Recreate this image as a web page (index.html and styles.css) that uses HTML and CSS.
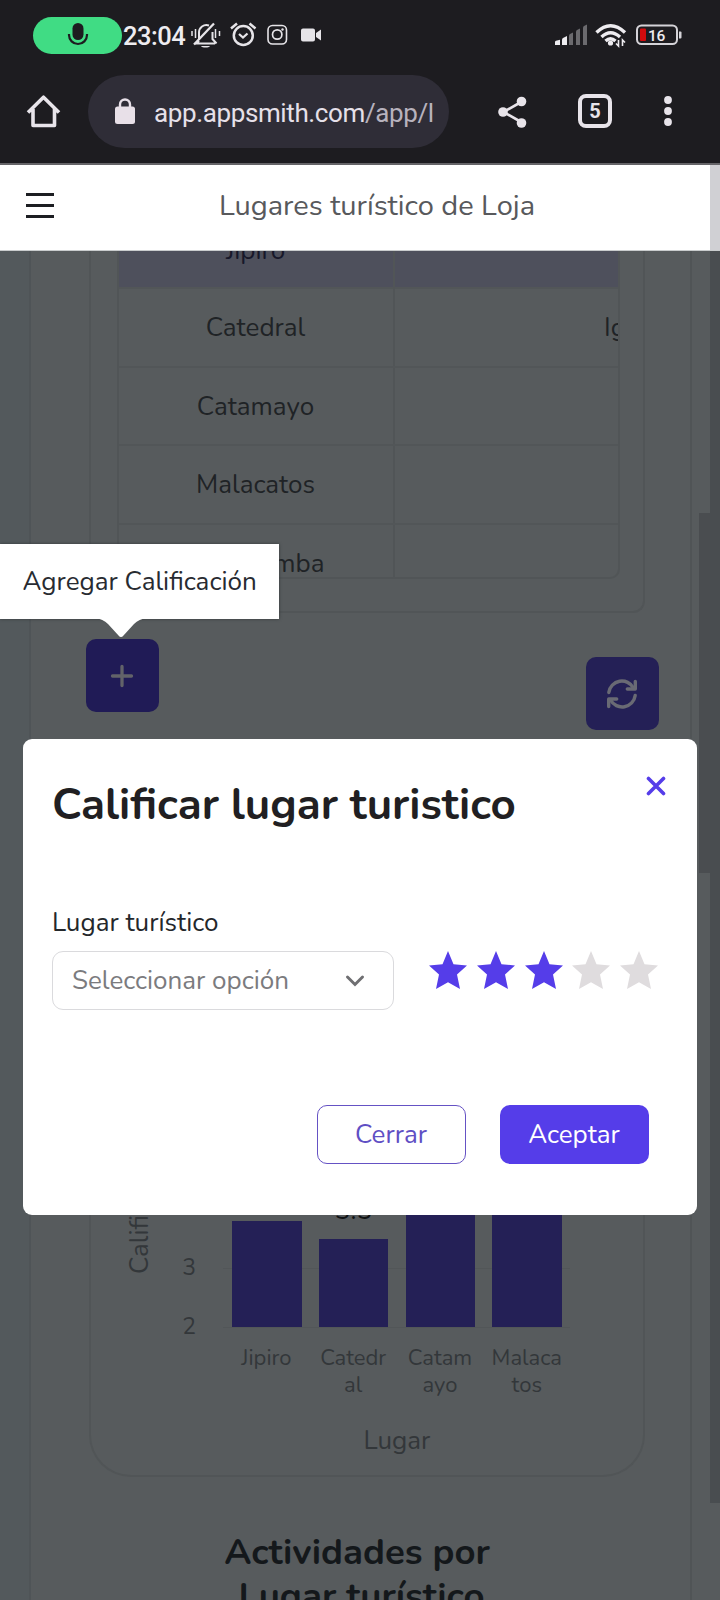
FILE: index.html
```html
<!DOCTYPE html>
<html lang="es">
<head>
<meta charset="utf-8">
<title>Lugares turístico de Loja</title>
<link rel="stylesheet" href="styles.css">
</head>
<body>
<div class="phone">
  <div class="status">
    <div class="mic-pill">
      <svg width="22" height="26" viewBox="0 0 22 26"><rect x="5.5" y="1" width="11" height="17" rx="5.5" fill="#1d1c20"/><path d="M2 12v1a9 9 0 0 0 18 0v-1" fill="none" stroke="#1d1c20" stroke-width="2.2"/></svg>
    </div>
    <span class="clock">23:04</span>
    <svg class="status-left" width="136" height="30" viewBox="188 20 136 30" fill="none" stroke="#e6e4e8" stroke-width="2">
      <path d="M199 41l-2 2.500h18M199 40V33a7.500 7.500 0 0 1 10-7.500M212.500 32v7l4 4.500" />
      <path d="M194 44.500L214 23.500" stroke-width="2.300"/>
      <path d="M201 46h9c-1 2-8 2-9 0z" fill="#e6e4e8" stroke="none"/>
      <path d="M192 31v5M195.500 29v9M215.500 29v9M219.500 31v5" stroke-width="1.500"/>
      <circle cx="243.300" cy="35.500" r="9.500" stroke-width="2.500"/>
      <path d="M231 28.500l6-5M255.500 28.500l-6-5" stroke-width="2.500"/>
      <path d="M239 34l4 3.500 4.500-4" stroke-width="2.300"/>
      <rect x="268" y="25.500" width="18.500" height="18.500" rx="4.500" stroke-width="1.600"/>
      <circle cx="277.200" cy="34.500" r="4.700" stroke-width="1.700"/>
      <circle cx="282.500" cy="29.500" r="1.200" fill="#e6e4e8" stroke="none"/>
      <path d="M303 28.500h10a2 2 0 0 1 2 2v9a2 2 0 0 1-2 2h-10a2 2 0 0 1-2-2v-9a2 2 0 0 1 2-2zM321 29.500v11l-5-3.500v-4z" fill="#e6e4e8" stroke="none"/>
    </svg>
    <svg class="status-right" width="130" height="30" viewBox="553 20 130 30" fill="none">
      <path d="M555 42q0-1 1-1.300l4-1V45h-5zM562 40q0-1.500 1-2l4-2v9h-5z" fill="#eeecf0"/>
      <path d="M569 36q0-1.500 1-2l3-1.500V45h-4zM576 32q0-1.500 1-2l3-1.500V45h-4zM583 28q0-1.500 1-2l3-1.500V45h-4z" fill="#6b6a6e"/>
      <g stroke="#eeecf0" stroke-width="3.400"><path d="M596.500 32.500q14-13.500 28.500 0M601.500 37q9-8.500 18.500 0M605.500 41q5-4.500 10 0"/></g>
      <circle cx="610.500" cy="43" r="2.600" fill="#eeecf0"/>
      <path d="M618.500 40v6l-2.500-2.500M622.500 46v-6l2.500 2.500" stroke="#eeecf0" stroke-width="1.600"/>
      <rect x="637" y="25.500" width="40" height="18.500" rx="4.500" stroke="#d5d3d8" stroke-width="2"/>
      <rect x="640" y="28.500" width="6" height="12.500" rx="1" fill="#d20b0d"/>
      <path d="M679 31.500h1.500q1 0 1 1v5q0 1-1 1H679z" fill="#d5d3d8"/>
      <text x="648" y="40.500" class="battery-text">16</text>
    </svg>
  </div>
  <div class="browser">
    <svg class="home" width="36" height="36" viewBox="0 0 36 36" fill="none" stroke="#e8e4ea" stroke-width="3.600" stroke-linejoin="round"><path d="M2 18.500L17.500 3.200 33 18.500M7 15v16.500h21.500V15"/></svg>
    <div class="address">
      <svg width="22" height="28" viewBox="0 0 22 28"><rect x="1" y="9.500" width="20" height="17.500" rx="2.500" fill="#e8e0e8"/><path d="M6 10V7.500a5 5 0 0 1 10 0V10" fill="none" stroke="#e8e0e8" stroke-width="2.400"/></svg>
      <span class="url">app.appsmith.com<span class="url-path">/app/l</span></span>
    </div>
    <svg class="share" width="30" height="34" viewBox="0 0 30 34" fill="#e8e4ea"><path d="M25 6.500L6.500 17 25 27.500" fill="none" stroke="#e8e4ea" stroke-width="2.600"/><circle cx="24.500" cy="6.500" r="4.800"/><circle cx="6" cy="17" r="4.800"/><circle cx="24.500" cy="28" r="4.800"/></svg>
    <div class="tabs">5</div>
    <svg class="dots" width="10" height="32" viewBox="0 0 10 32" fill="#e8e4ea"><circle cx="5" cy="5" r="3.900"/><circle cx="5" cy="16" r="3.900"/><circle cx="5" cy="27" r="3.900"/></svg>
  </div>
  <header class="appbar">
    <div class="burger"><i></i><i></i><i></i></div>
    <h1>Lugares turístico de Loja</h1>
    <div class="appbar-scroll"></div>
  </header>
  <main class="page">
    <section class="canvas">
      <div class="panel table-panel">
        <div class="table">
          <div class="row selected"><span>Jipiro</span><span></span></div>
          <div class="row"><span>Catedral</span><span class="clipped">Iglesia</span></div>
          <div class="row"><span>Catamayo</span><span></span></div>
          <div class="row"><span>Malacatos</span><span></span></div>
          <div class="row"><span>Vilcabamba</span><span></span></div>
        </div>
      </div>
      <div class="actions">
        <button class="square add"><svg width="24" height="24" viewBox="0 0 24 24" stroke="#626369" stroke-width="3.300" stroke-linecap="round"><path d="M12 2.500v19M2.500 12h19"/></svg></button>
        <button class="square refresh"><svg width="32" height="32" viewBox="0 0 32 32" fill="none" stroke="#696a74" stroke-width="3.400" stroke-linecap="round" stroke-linejoin="round"><path d="M2.800 14.500A13.200 13.200 0 0 1 27.500 10M29.200 17.500A13.200 13.200 0 0 1 4.500 22"/><path d="M29.300 3.500v7.500h-8M2.700 28.500V21h8"/></svg></button>
      </div>
      <div class="panel chart">
        <div class="y-title"><span>Calificación</span></div>
        <div class="ticks"><span>3</span><span>2</span></div>
        <div class="bars">
          <div class="bar" style="height:106px"></div>
          <div class="bar" style="height:88px"><b>3.5</b></div>
          <div class="bar" style="height:300px"></div>
          <div class="bar" style="height:300px"></div>
        </div>
        <div class="labels"><span>Jipiro</span><span>Catedr<br>al</span><span>Catam<br>ayo</span><span>Malaca<br>tos</span></div>
        <div class="x-title">Lugar</div>
      </div>
      <h2><span>Actividades por</span><span class="second">Lugar turístico</span></h2>
    </section>
    <div class="scroll-inner"></div>
    <div class="scroll-outer"></div>
  </main>

  <div class="tooltip">Agregar Calificación
    <svg width="52" height="20" viewBox="0 0 52 20"><path d="M0 0H52Q44 1 39 6L28.500 17.500q-2.500 3-5 0L13 6Q8 1 0 0z" fill="#fff"/></svg>
  </div>
  <div class="modal">
    <div class="modal-head">
      <h3>Calificar lugar turistico</h3>
      <svg width="20" height="20" viewBox="0 0 20 20" stroke="#553de9" stroke-width="3.600" stroke-linecap="round"><path d="M2.500 2.500l15 15M17.500 2.500L2.500 17.500"/></svg>
    </div>
    <label>Lugar turístico</label>
    <div class="fields">
      <div class="select"><span>Seleccionar opción</span><svg width="20" height="14" viewBox="0 0 20 14" fill="none" stroke="#6f6f72" stroke-width="3" stroke-linecap="round"><path d="M2.500 3l7.500 7.500L17.500 3"/></svg></div>
      <div class="stars">
        <svg class="on" viewBox="0 0 38 38"><path d="M19 0L24.500 13.200 38 14.600 28 23.500 31 38 19 31.200 7 38 10 23.500 0 14.600 13.500 13.200z"/></svg>
        <svg class="on" viewBox="0 0 38 38"><path d="M19 0L24.500 13.200 38 14.600 28 23.500 31 38 19 31.200 7 38 10 23.500 0 14.600 13.500 13.200z"/></svg>
        <svg class="on" viewBox="0 0 38 38"><path d="M19 0L24.500 13.200 38 14.600 28 23.500 31 38 19 31.200 7 38 10 23.500 0 14.600 13.500 13.200z"/></svg>
        <svg viewBox="0 0 38 38"><path d="M19 0L24.500 13.200 38 14.600 28 23.500 31 38 19 31.200 7 38 10 23.500 0 14.600 13.500 13.200z"/></svg>
        <svg viewBox="0 0 38 38"><path d="M19 0L24.500 13.200 38 14.600 28 23.500 31 38 19 31.200 7 38 10 23.500 0 14.600 13.500 13.200z"/></svg>
      </div>
    </div>
    <div class="modal-actions"><button class="btn outline">Cerrar</button><button class="btn solid">Aceptar</button></div>
  </div>
</div>
</body>
</html>
```
FILE: styles.css
```css
* { box-sizing: border-box; }
body { margin: 0; background: #575b5d; font-family: Nunito, "Noto Sans", sans-serif; }
svg { display: block; flex: none; }
h1, h2, h3 { margin: 0; }
button { font-family: inherit; padding: 0; border: 0; }
.phone { position: relative; width: 720px; height: 1600px; overflow: hidden; display: flex; flex-direction: column; }

.status { height: 70px; background: #1d1c20; display: flex; align-items: center; flex: none; }
.mic-pill { width: 89px; height: 37px; margin-left: 33px; border-radius: 19px; background: #40dc84; display: flex; align-items: center; justify-content: center; }
.clock { width: 65px; padding-left: 1px; font: 500 25.5px/30px Roboto, sans-serif; letter-spacing: -0.5px; color: #eeecf0; padding-top: 2px; white-space: nowrap; }
.status-left { margin-left: 1px; }
.status-right { margin-left: auto; margin-right: 37px; }
.battery-text { font: 500 15.5px Roboto, sans-serif; fill: #eeecf0; letter-spacing: -0.2px; }

.browser { height: 95px; flex: none; background: #1d1c20; border-bottom: 2px solid #656468; display: flex; padding-top: 5px; align-items: flex-start; }
.home { margin: 19px 0 0 26px; }
.address { width: 361px; height: 73px; margin-left: 26px; border-radius: 37px; background: #2f2d37; display: flex; align-items: center; padding-left: 26px; }
.address svg { margin-bottom: 2px; }
.url { margin-left: 18px; padding-top: 2px; font: 400 26px/32px Roboto, sans-serif; letter-spacing: -0.38px; color: #e6e0e9; white-space: nowrap; }
.url-path { color: #b7b2bd; }
.share { margin: 20px 0 0 48px; }
.tabs { width: 34px; height: 34px; margin: 19px 0 0 51px; border: 4px solid #e8e4ea; border-radius: 8px; font: 700 20px/26px Roboto, sans-serif; color: #e8e4ea; text-align: center; }
.dots { margin: 20px 0 0 51px; }

.appbar { height: 86px; flex: none; background: #fff; display: flex; border-bottom: 1px solid #c9cccd; }
.burger { width: 28px; margin: 28px 0 0 26px; display: flex; flex-direction: column; gap: 8px; }
.burger i { height: 3px; background: #1c1e22; }
.appbar h1 { margin: 22px 0 0 165px; font-weight: 400; font-size: 29px; line-height: 38px; color: #58595c; white-space: nowrap; }
.appbar-scroll { width: 10px; margin-left: auto; background: #d0d0d4; }

.page { position: relative; height: 1349px; flex: none; background: #53595c; overflow: hidden; padding-left: 29px; }
.canvas { width: 663px; height: 1349px; background: #575b5d; border-left: 2px solid #4f5457; border-right: 2px solid #505456; box-shadow: 30px 0 0 #575b5d; }
.panel { width: 556px; margin-left: 58px; border: 2px solid #515557; }
.table-panel { height: 362px; border-top: 0; border-radius: 0 0 12px 12px; padding: 0 23px 0 26px; }
.table { height: 328px; border: 2px solid #515557; border-top: 0; border-radius: 0 0 10px 10px; overflow: hidden; }
.row { height: 78.700px; display: flex; border-bottom: 2px solid #525658; font-size: 26px; line-height: 77px; color: #1f2326; }
.row span:first-child { width: 276px; padding-right: 1px; text-align: center; border-right: 2px solid #515557; flex: none; }
.row.selected { height: 38px; background: #4e505c; color: #17182a; }
.row.selected span { line-height: 0; height: 38px; }
.row .clipped { padding-left: 209px; white-space: nowrap; }
.actions { height: 168px; display: flex; justify-content: space-between; padding: 26px 31.500px 0 54.500px; }
.square { width: 73px; height: 73px; border-radius: 10px; display: flex; align-items: center; justify-content: center; }
.add { background: #201b56; }
.refresh { background: #242056; margin-top: 18px; }
.chart { height: 696px; border-top: 0; border-radius: 0 0 42px 42px; display: grid; grid-template-columns: 60px 72px 347px; grid-template-rows: 547px 96px 40px; color: #33373a; }
.y-title { writing-mode: vertical-rl; transform: rotate(180deg); justify-self: end; font-size: 26px; line-height: 36px; padding-top: 54px; margin-right: -7px; }
.ticks { display: flex; flex-direction: column; justify-content: flex-end; gap: 29px; text-align: right; font-size: 23px; line-height: 30px; padding-right: 27px; margin-bottom: -14px; }
.bars { display: flex; align-items: flex-end; justify-content: space-between; padding: 0 8px 0 9px; background: linear-gradient(#525658, #525658) 0 487px / 347px 1px no-repeat; border-bottom: 1px solid #525658; }
.bar { width: 69.500px; background: #242056; text-align: center; }
.bar b { display: block; margin-top: -43px; font-weight: 400; font-size: 26px; line-height: 30px; color: #101214; }
.labels { grid-column: 3; display: grid; grid-template-columns: repeat(4, 86.800px); text-align: center; font-size: 22px; line-height: 27px; padding-top: 17px; }
.x-title { grid-column: 3; text-align: center; font-size: 26px; line-height: 34px; padding-left: 1px; }
h2 { margin-top: 53px; text-align: center; font-size: 36.600px; line-height: 44px; font-weight: 700; color: #14181b; white-space: nowrap; }
h2 span { display: block; padding-right: 7px; }
h2 .second { padding: 0 0 0 2px; }
.scroll-inner { position: absolute; left: 699px; top: 262px; width: 11px; height: 360px; background: #4a4d50; }
.scroll-outer { position: absolute; left: 710px; top: 0; width: 10px; height: 1252px; background: #494d50; }

.tooltip { position: absolute; left: 0; top: 544px; width: 279px; height: 75px; background: #fff; padding-left: 22.500px; font-size: 26px; line-height: 75px; color: #282b31; white-space: nowrap; box-shadow: 0 0 3px #34383a; }
.tooltip svg { position: absolute; left: 95px; top: 74px; }

.modal { position: absolute; left: 23px; top: 739px; width: 674px; height: 476px; border-radius: 9px; background: #fff; padding: 33px 48px 0 29px; }
.modal-head { display: flex; justify-content: space-between; height: 133px; margin-right: -17px; }
.modal-head h3 { padding-top: 3px; font-size: 43.900px; line-height: 60px; color: #211f22; white-space: nowrap; }
.modal-head svg { margin: 4px 0 0; }
.modal label { display: block; height: 46px; padding-top: 1px; font-size: 26px; line-height: 34px; color: #24272b; }
.fields { display: flex; justify-content: space-between; height: 154px; margin-right: -9px; }
.select { width: 342px; height: 59px; border: 1.500px solid #dadadd; border-radius: 11px; display: flex; align-items: center; justify-content: space-between; padding: 0 28px 0 19px; font-size: 26px; color: #7b7b7e; white-space: nowrap; }
.stars { display: flex; gap: 9.700px; }
.stars svg { width: 38px; height: 38px; fill: #dfdcde; }
.stars .on { fill: #553de9; }
.modal-actions { display: flex; justify-content: flex-end; gap: 34px; }
.btn { width: 149px; height: 59px; border-radius: 10px; font-size: 26px; line-height: 57px; padding-right: 1px; }
.outline { background: #fff; border: 1.500px solid #6552c4; color: #5f4fc4; }
.solid { background: #553de9; color: #fff; }
```
